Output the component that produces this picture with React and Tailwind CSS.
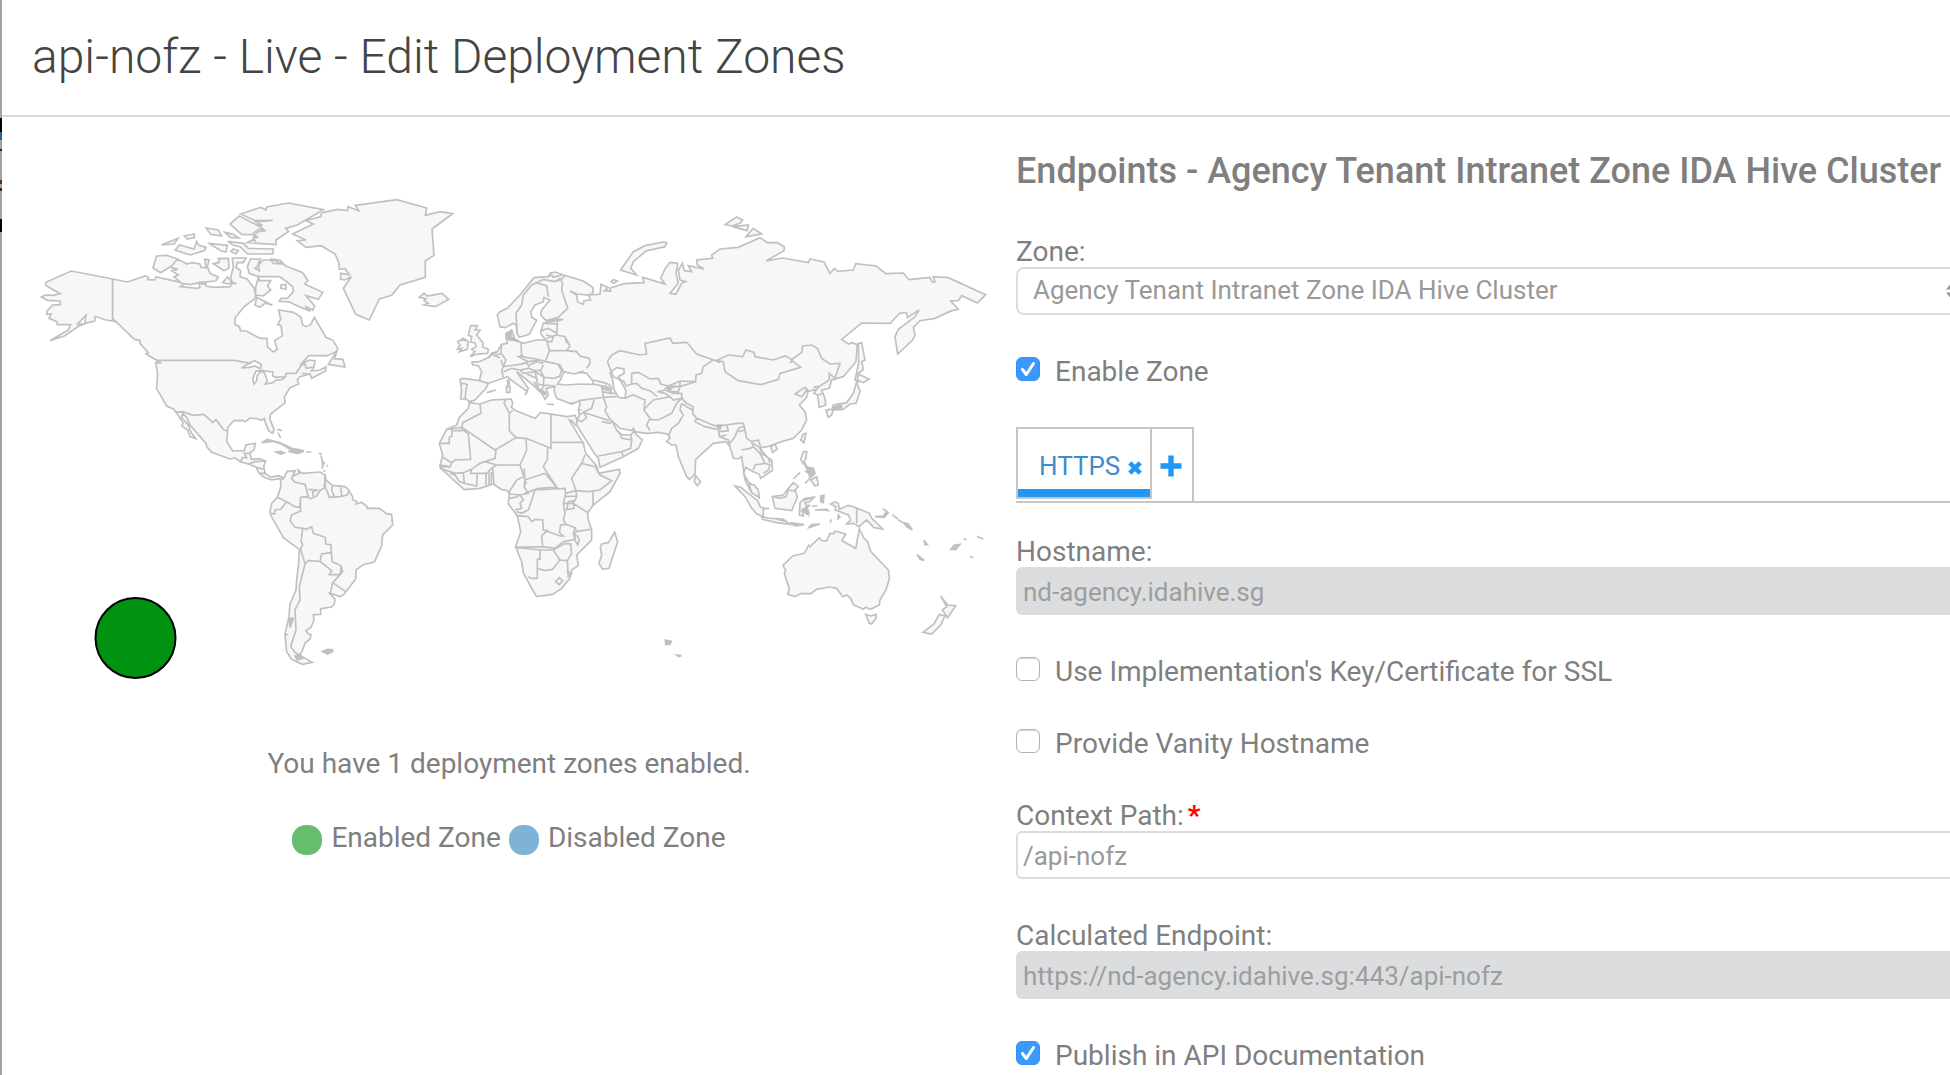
const NORTH_AMERICA = [
  // Alaska
  'M338 297L214 273L138 307L137 316L180 341L160 346L137 345L124 351L143 361L180 363L181 374L158 375L141 393L140 403L153 402L147 415L171 425L172 434L212 434L205 450L150 482L193 468L237 438L254 432L233 432L258 406L254 430L284 423L286 409L318 420L345 424L370 437L390 465L403 478L420 481L426 465L382 425L370 432L338 416Z',
  // Canada, United States, Mexico and Central America
  'M338 297L382 306L437 288L446 292L443 299L464 300L468 291L530 304L556 310L541 320L592 325L600 322L597 312L618 311L617 318L642 322L690 320L697 310L710 310L697 308L692 292L700 262L697 234L738 234L730 248L712 248L708 262L722 272L720 290L741 297L763 325L767 345L764 356L733 380L706 412L704 432L718 440L722 453L739 453L780 475L801 475L802 500L820 516L832 508L824 482L847 467L843 437L833 433L842 418L836 390L880 397L902 410L908 434L918 440L932 434L943 412L978 472L999 481L1014 506L1008 515L982 527L926 527L900 556L927 540L945 542L942 561L934 573L960 570L978 560L977 573L935 595L930 582L900 590L892 600L896 612L870 623L853 651L855 669L812 702L809 716L822 748L818 760L806 752L796 728L793 716L785 721L770 716L750 714L735 725L728 721L702 722L684 741L680 785L698 813L733 812L738 794L766 790L762 810L750 818L754 838L777 836L797 843L791 860L796 880L812 892L835 887L860 897L848 905L838 896L815 900L795 893L777 880L769 862L745 852L722 846L705 834L690 837L635 817L620 800L618 790L570 735L560 712L548 700L545 712L565 735L573 757L587 776L570 770L563 750L545 738L550 730L528 696L520 687L500 678L470 626L473 580L467 548L484 549L438 522L445 518L420 490L420 481L403 478L390 465L338 416Z',
  'M1012 510L985 553L1035 561L1029 538L1003 536Z',
  'M470 228L500 226L535 238L515 258L482 278L459 264Z',
  'M530 240L545 243L560 252L575 248L600 252L603 262L618 263L614 238L627 240L622 260L630 280L655 291L647 303L600 307L572 314L545 310L522 290L535 285L515 272L533 268L512 262Z',
  'M484 195L534 175L522 192Z',
  'M553 168L583 162L583 173L562 177Z',
  'M526 210L538 195L582 207L590 185L597 196L618 202L614 212L570 225Z',
  'M618 144L655 150L664 168L632 163Z',
  'M675 157L700 163L716 174L690 172Z',
  'M626 190L682 196L678 216L664 213Z',
  'M692 214L700 207L715 212L708 222Z',
  'M683 184L730 190L745 205L820 207L818 222L743 222L720 200L700 196Z',
  'M640 251L658 247L655 236L685 235L687 264L672 272Z',
  'M668 308L683 291L697 308L682 312Z',
  'M722 102L783 82L797 90L800 81L866 69L970 89L892 135L857 145L866 154L828 180L828 194L742 188L757 180L765 182L760 172L775 172L762 166L775 155L795 152L772 135L788 136L765 126L818 121L765 122Z',
  'M718 108L690 132L725 163L755 164L775 148L793 150L768 134Z',
  'M752 237L782 237L775 250L778 272L765 265L790 240L812 240L820 250L850 252L810 237L840 240L855 257L908 278L924 302L914 312L968 337L955 358L918 347L944 378L938 391L915 378L930 394L880 372L870 366L838 364L843 355L862 355L880 335L878 320L860 305L838 290L775 290L748 280L742 260Z',
  'M775 292L778 302L812 302L803 318L812 330L790 348L767 345L767 322Z',
  'M770 352L765 376L780 382L796 369L817 376Z',
  'M843 315L858 313L858 327L842 325Z',
  // Greenland and Iceland
  'M965 98L1013 88L1042 92L1044 80L1076 92L1066 76L1190 59L1280 84L1276 106L1320 95L1358 101L1296 147L1302 226L1276 243V292L1200 315L1175 346L1138 357L1108 420L1067 403L1030 325L1054 290L1035 300L1022 298L1022 280L1048 284L1035 266L1018 268L1016 247L1005 222L964 197L918 202L892 182L918 180L878 162L940 132L918 122L962 110Z',
  'M1258 352L1272 340L1282 348L1326 340L1346 358L1306 380L1272 375L1285 370L1272 362L1278 356Z',
];

const NORTH_AMERICA_BORDERS = [
  'M467 541H703L755 551',
  'M856 590L858 580L888 580L905 555L915 552L918 565L942 561M905 580L930 582',
  'M525 697L548 695L580 706L612 703L638 727L648 719L672 750L684 753',
  'M722 846L727 833L740 833L733 820L754 820M745 852L765 845L797 843M769 862L791 868M777 880L796 880',
];

const NORTH_AMERICA_LAKES = [
  'M725 564L755 545L765 543L783 553L783 563L778 565L765 558L748 562Z',
  'M785 572L767 574L758 598L762 612L770 603L771 588Z',
  'M785 572L818 576L818 588L826 592L856 590L848 598L828 600L818 608L795 612L802 603L795 582Z',
];

const SOUTH_AMERICA = [
  'M122 238L130 236L142 214L165 212L160 228L178 220L172 207L186 220L240 216L256 226L258 240L277 256L316 260L326 270L338 290L338 300L350 304L348 312L365 307L380 318L382 325L418 325L440 341L455 343L458 375L428 405L424 440L403 486L370 494L348 510L347 537L310 585L300 590L270 580L285 598L283 612L275 621L242 626V643L220 644L222 660L213 682L198 693L203 700L213 705L210 717L195 730L186 755L178 765L195 775L217 787L187 793L155 778L140 755L135 702L147 650L150 612L168 570L170 540L176 490L178 448L131 414L92 346L90 335L95 310L112 292L122 262Z',
];

const SOUTH_AMERICA_BORDERS = [
  'M112 292L140 305L165 320L180 322L182 292L200 290L212 296L228 290L240 272L256 262L254 226',
  'M165 212L155 235L165 247L195 253L205 290M205 268L235 270L218 275L220 290',
  'M140 305L122 328L105 330L104 342L92 340M180 310L182 333L155 345L150 362L165 382L188 385L200 388L215 380L220 400L256 412L257 432L273 434L274 458L245 462L240 484L205 482L195 492L182 448L188 432L183 425L188 385',
  'M274 458L277 485L303 497L302 515L298 524L268 524L275 512L240 484M303 497L308 515L278 548L270 585M278 548L316 574',
  'M195 492L178 560L180 600L165 630L168 690L152 740L165 757L178 765M258 240L252 258L262 275L268 292L300 290L322 285L327 272M277 256L275 270L283 290M302 262L305 286',
];

const SOUTH_AMERICA_ISLANDS = [
  'M65 128L82 118L120 128L155 145L190 152L160 154L145 145L130 135L100 124Z',
  'M108 156L122 154L133 158L122 162Z',
  'M145 154L192 154L172 160ZM198 156H214',
  'M112 88L126 92M114 98L122 114M236 160L246 162M243 166L246 182L252 188L246 206M260 195L264 199M250 214L256 212',
  'M247 754L262 748L278 749L278 755L262 762Z',
  'M148 655L160 655L155 670L150 682ZM165 768L180 762L188 775L172 780ZM136 702L145 705',
];

const AFRICA = [
  'M148 668L180 672L215 660L274 657L278 670L274 682L288 692L345 715L362 697L440 710L466 706L473 728L468 737L455 722L448 720L490 790L497 820L530 858L536 880L598 868L600 880L570 935L520 975L503 998L505 1020L515 1050V1080L495 1100L470 1125L475 1157L455 1170L450 1195L425 1225L398 1243L350 1250L335 1225L310 1178L305 1145L287 1100L302 1055L292 1007L265 972L268 938L258 930L245 929L220 912L180 925L133 929L100 900L85 885L60 863L63 845L68 825L58 790L80 748L110 735L118 712L145 685Z',
  'M584 1057L593 1085L567 1165L548 1168L537 1150L545 1125L541 1100L545 1092L565 1088Z',
];

const AFRICA_BORDERS = [
  'M180 672L183 700L128 728L126 742L80 748M126 742L225 810L288 773L268 752V700L252 668L258 657M268 700L278 692',
  'M95 740L96 768L88 772V790L58 790M126 742V752L95 752M145 762L152 838L105 840L95 848L68 832M145 762L130 750',
  'M393 702V805L318 775L288 773M393 787L490 787M383 800L382 838L370 860L410 922L355 925L315 940M318 775L320 810L300 855L230 855L195 845L225 835L228 810',
  'M195 845L180 850L155 868L130 878L105 880L60 865M155 868L152 880L200 880L218 862L230 855M130 878L133 910L170 918L172 880M198 880V915M207 878V915M214 876V912M218 862L222 912M133 910L118 905L105 885L90 880M60 856L90 862L95 848',
  'M300 855L312 890L290 900L265 940M312 865L315 900L375 880M375 880L410 922M315 900L312 920L325 940L300 945L270 942M312 920L320 905M315 940L345 930L435 925L437 940L468 932L455 895L485 850L495 825M485 850L525 860L540 885L575 902L540 930L505 935L468 932M519 932V975',
  'M345 930L325 990L305 1000L290 995M300 945L310 960L300 970L305 985L285 990M265 955L285 952L300 945M437 940L430 970L435 1000L430 1020L438 1033L465 1043L470 1055L512 1048M468 932L470 950L460 970L503 998M430 970L460 970M435 990L462 985L460 962L445 965L440 990M437 950L470 948',
  'M292 1007L325 1010L335 1025L345 1018L368 1020L370 1050L385 1055L420 1068L430 1068L418 1058L422 1035L438 1033M370 1050L382 1052L365 1068L368 1100L287 1102M368 1100L405 1105L430 1085L465 1078L460 1062L465 1043M465 1055L465 1080L473 1095L478 1080L470 1065',
  'M287 1102L360 1110L360 1138H352V1195L335 1195L325 1190M352 1165L375 1172L398 1168L420 1140L400 1110L360 1110M420 1140L442 1142L455 1120L452 1092L435 1090L400 1110M442 1142L445 1190L455 1180L440 1175M418 1193L428 1203L417 1214L407 1205Z',
];

const EURASIA = [
  'M232 405L240 395L262 385L300 345L342 293L385 290L390 280L405 276L440 288L490 303L518 322L520 335L515 342L500 345L470 342L450 333L470 345L473 366L490 373L492 362L512 360L505 345L540 343L543 313L565 323L553 332L572 333L570 325L612 311L672 308L668 292L735 312L722 295L735 267L750 247L773 250L768 280L775 310L750 340L768 342L785 310L797 305L780 300L775 270L787 250L793 272L815 275L805 257L852 267L832 255L830 240L878 235L875 225L900 207L955 202L1020 173L1042 188L1072 188L1093 200L1092 212L1038 243L1088 234L1165 248L1170 237L1212 246L1230 280L1243 265L1253 274L1300 270L1307 251L1368 258L1398 281L1450 279L1467 299L1530 292L1537 306L1545 305L1540 290L1585 293L1697 344L1672 369L1625 347L1615 362L1592 363L1615 388L1595 392L1545 415L1500 422L1480 442L1485 465L1478 480L1433 522L1425 470L1435 448L1485 410L1497 390L1462 413L1460 399L1440 399L1415 425L1412 430L1325 429L1265 478L1285 492L1295 488L1312 494L1308 545L1270 590L1235 600L1228 625L1205 630L1215 655L1217 675L1198 682L1193 645L1182 640L1190 628L1160 635L1162 628L1145 650L1125 642L1155 622L1165 632L1160 652L1138 675L1155 695L1160 720L1145 750L1120 775L1085 785L1042 800L1022 803L1025 820L1055 840L1058 870L1022 895L1018 883L1000 875L977 862L970 880L985 905L1012 930L1017 952L990 930L975 900L970 865L965 830L955 837L940 835L930 800L918 785L880 790L827 838L825 880L818 890L807 898L800 890L775 830L768 795L755 795L740 785L750 773L742 762L715 757L680 760L645 755L640 745L635 752L600 745L575 722L590 750L605 764L632 765L640 755L667 780L655 805L610 830L540 862L535 835L520 815L495 775L470 735L470 725L478 705L475 690L480 675L478 662L455 672L410 655L402 632L405 620L378 625L385 645L375 658L365 640L350 625L315 595L290 575L300 590L325 625L315 645L322 635L280 605L262 590L250 595L205 610L198 625L165 660L148 665L138 657L122 657L125 630L120 598L130 595L178 602L185 575L175 557L158 555L156 546L178 545L200 535L232 515L245 493L262 490L258 462L275 450L285 480L310 490L350 480L378 480L365 465L362 455L370 430L430 418L378 422L362 405L365 390L390 360L372 352L370 365L345 375L333 395L335 412L350 420L340 440L328 463L298 472L292 462L288 435L280 430L255 443L240 440Z',
  // Great Britain and Ireland
  'M152 437L172 437L165 450L180 450L170 465L190 490L188 500L205 508L203 520L170 523L150 530L165 515L155 508L168 500L165 488L152 487L155 470L145 465Z',
  'M113 485L130 475L145 485L142 508L118 515L125 505L112 508L120 495Z',
  // Novaya Zemlya
  'M602 270L640 215L675 197L730 186L740 188L735 200L678 213L640 245L632 265L650 285Z',
  'M573 305L580 299L592 303L582 310Z',
  // Severnaya Zemlya
  'M915 134L950 111L968 120L960 130L935 138Z',
  'M938 140L985 135L982 152Z',
  'M978 170L1000 145L1025 162Z',
  // Sakhalin and Japan
  'M1315 490L1325 488L1335 540L1325 545L1330 568L1315 580L1318 605L1305 600L1316 550Z',
  'M1315 582L1347 597L1330 608L1312 600Z',
  'M1310 605L1320 635L1308 670L1290 672L1270 688L1235 690L1240 675L1280 668L1300 640Z',
  'M1218 690L1240 688L1235 705L1225 712Z',
  // Mediterranean islands
  'M262 602L268 600L268 612L264 614ZM259 619L270 619L270 637L260 637Z',
  // Sri Lanka
  'M827 887L842 905L832 917L823 905Z',
];

const SEAS = [
  // Black Sea
  'M432 575L440 577L462 582L480 577L500 580L520 605L518 613L480 612L440 615L412 612L420 602Z',
  // Caspian Sea
  'M570 578L590 563L612 567L612 580L595 590L618 632L615 655L595 652L582 628L578 600Z',
];

const EURASIA_BORDERS = [
  // Scandinavia
  'M292 462L288 400L305 375L310 345L335 315L350 308L380 318L385 350M350 308L370 298L405 305L425 298L435 285M405 305L420 295L428 310L425 330L443 385L415 412L378 422M385 290L395 285L400 292L425 285',
  // Baltic states, Belarus, Ukraine and Poland
  'M370 430L412 432L410 465L380 475M362 452L385 445L408 458M410 465L435 470L450 498L440 512L388 512L380 480M378 465L400 470L395 485L380 485M415 412L412 432M435 470L440 490M440 512L470 515L480 528L508 535L510 550L500 565',
  'M388 512L382 530L375 545L362 540L305 530L303 485',
  'M375 545L405 550L420 555L430 575M415 555L425 572L418 590L400 595L372 592L362 572L370 555',
  // Central Europe and the Balkans
  'M245 493L243 520L258 540L250 560L300 553L325 545L295 530L310 525M325 545L360 540M232 515L215 520L205 535M243 520L225 527L240 533M243 540L250 560L245 570L250 592M250 575L275 565L300 570L325 565M300 553L320 548L328 562M325 565L345 572L362 572M328 555L350 545L370 550',
  'M300 570L310 580L345 575L350 595L320 582M345 575L362 585L372 592L370 615L352 612L350 595M352 612L355 625M370 615L405 618M372 615L365 630L380 640',
  'M130 610L142 614L138 630L135 657M130 610L122 612M178 602L205 610M262 455L258 475L285 478M262 475L295 485',
  // Turkey and the Caucasus
  'M520 612L545 618L548 635L550 652L478 662M520 600L560 610L575 620M545 618L575 625L570 640L548 635M555 615L575 640L590 640M548 625L572 632',
  // Middle East
  'M550 652L560 680L555 692L568 715L575 722M478 705L490 697L568 722M522 660L515 685L490 697M470 720L485 725L500 712L490 697M575 722L570 730L545 725M610 830L605 815L535 828M605 815L632 805L635 780L605 775L600 762M632 765L635 780M475 690L485 690',
  'M615 655L640 645L675 660L672 690L690 715L680 735L690 752M590 650L550 652M675 685L700 660L750 650L760 660L785 655L770 670L755 700L715 720L690 718',
  // Central Asia
  'M562 545L575 525L600 512L660 525L680 522L675 490L750 474L758 490L800 487L830 522L880 540L850 560L845 580L828 585L827 605L780 603L745 618L722 612L715 595L690 597L655 577L635 580L635 612L618 618L612 605L580 590L562 545',
  'M635 612L650 610L665 625L690 632L712 650M745 618L730 632L712 635L735 640L750 650M745 618L780 620L775 635L745 635M780 603L780 620L827 605M760 620L740 632L760 640L785 640L785 655M745 625L775 618',
  // China, Mongolia
  'M880 540L910 545L915 575L955 602L1022 614L1075 598L1080 580L1142 562L1120 545L1110 535L1095 528L1060 540L1005 530L1002 517L978 510L968 530L925 525L888 542L900 548',
  'M1110 550L1120 535L1145 517L1148 498L1175 495L1192 505L1205 535L1230 552L1260 550L1245 595L1228 580L1228 600L1200 618L1180 622M1190 628L1200 618M1195 645L1208 640',
  // South Asia
  'M785 655L800 670L820 680L818 700L830 715L825 725L855 740L890 748L900 738L950 730L970 730L975 750L955 755M825 712L870 732L895 740L890 748M785 670L780 690L790 705L775 730L755 745L745 770M785 670L800 680L818 690M895 740L898 770L925 780L930 800M898 755L925 752L920 735M900 770L920 765',
  'M970 740L955 745L945 770L930 790M975 750L980 775L995 785L1000 800L990 805L965 810M995 785L1015 780L1022 800M1000 800L1020 820L1035 850L1005 855L1000 870M1035 850L1050 855L1045 870L1030 880M1015 800L1045 835L1050 850M1000 790L1015 800',
];

const SMALL_EUROPE = [
  'M262 460L275 455L272 470L290 480L268 480Z',
  'M350 625L365 630L378 645L368 640ZM342 605L350 620',
  'M380 672L402 674M450 670L465 668M200 638L228 630M545 622L558 630L572 632M590 750L600 762M740 625L760 620L748 632M120 480L142 482M490 572L480 578',
  'M890 735L905 735L900 748M60 856L86 858L62 862Z',
  'M736 1380L754 1384L750 1393L737 1393ZM770 1425L784 1427L776 1430Z',
];

const OCEANIA = [
  // Australia and Tasmania
  'M538 447L552 475L563 485L572 514L625 570L628 597L618 630L600 660L598 675L572 688L557 682L550 688L520 674L512 655L500 645L488 650L470 625L447 621L410 628L392 641L362 641L345 650L323 643L328 627L313 580L317 570L309 556L338 528L373 520L386 496L390 500L418 474L427 483L440 482L450 460L462 461L465 453L497 462L486 482L527 505Z',
  'M557 703L572 708L588 703L588 715L575 732L568 730Z',
  // New Zealand
  'M782 648L803 675L827 677L803 713L787 690L800 680Z',
  'M778 703L795 708L782 735L755 762L729 757L762 732Z',
  // Sumatra and Java
  'M165 318L182 322L233 362L240 380L250 385L250 410L232 403L215 385L195 350Z',
  'M245 410L265 414L310 418L330 433L290 428L248 418Z',
  // Borneo
  'M277 350L310 345L325 325L340 308L355 320L345 330L352 352L335 392L285 385Z',
  // Sulawesi
  'M360 368L375 355L402 352L388 366L375 368L380 378L390 375L378 385L385 405L375 398L368 390L370 408L358 405Z',
  // New Guinea
  'M452 372L465 366L475 370L478 388L505 376L530 384L568 400L575 415L608 447L582 443L560 420L548 430L538 440L520 430L500 432L512 420L505 405L480 395L465 390L468 380Z',
  // Philippines
  'M370 215L380 215L378 235L372 245L382 262L368 248L362 238Z',
  'M385 262L400 265L405 280L395 290L385 280Z',
  'M392 300L410 290L415 315L405 318Z',
  // Taiwan and Hainan
  'M378 160L372 188L362 180L370 162Z',
  'M272 200L285 193L292 207L278 217Z',
  // Malay Peninsula
  'M207 312L222 315L235 330L237 352L215 338Z',
];

const OCEANIA_BORDERS = ['M530 384V430', 'M280 350L300 355L318 350L325 330L345 333'];

const OCEANIA_ISLANDS = [
  'M340 297L360 278M375 310L385 300L395 285L378 275L398 270L405 282M376 262L392 268L388 290',
  'M330 428L372 434L345 438ZM388 442L420 432L395 434ZM395 378L412 378M405 390L440 388L448 394M422 348L432 346L430 368L422 365Z',
  'M450 428L455 418M475 405L480 412L474 416ZM250 385L268 386M292 418L318 424',
  'M585 410L610 408L620 395L608 386L625 398L612 412ZM636 404L655 418M655 420L668 428M670 428L685 432L697 450L680 440Z',
  'M732 481L742 494L735 494ZM711 524L733 541L720 538ZM813 508L822 496L840 493L828 508ZM850 476L860 480M891 469L910 477M870 530L880 533',
  'M370 362L402 350M362 395L380 380L388 402',
  'M442 90L450 86M460 82L485 75L485 84L460 90Z',
];

function Land({ x, y, shapes, borders = [], seas = [], solids = [] }) {
  return (
    <g transform={`translate(${x} ${y}) scale(0.33333)`} strokeWidth="5">
      {shapes.map((d) => (
        <path key={d} d={d} fill="#f7f7f7" />
      ))}
      {seas.map((d) => (
        <path key={d} d={d} fill="#ffffff" />
      ))}
      {borders.map((d) => (
        <path key={d} d={d} fill="none" />
      ))}
      {solids.map((d) => (
        <path key={d} d={d} fill="#c0c0c0" />
      ))}
    </g>
  );
}

function WorldMap() {
  return (
    <svg
      viewBox="2 180 1014 500"
      className="block w-full"
      role="img"
      aria-label="Deployment zone map"
      stroke="#c0c0c0"
      strokeLinejoin="miter"
    >
      <Land x={0} y={180} shapes={NORTH_AMERICA} borders={NORTH_AMERICA_BORDERS} seas={NORTH_AMERICA_LAKES} />
      <Land x={240} y={400} shapes={SOUTH_AMERICA} borders={SOUTH_AMERICA_BORDERS} solids={SOUTH_AMERICA_ISLANDS} />
      <Land x={420} y={180} shapes={AFRICA} borders={AFRICA_BORDERS} />
      <Land x={420} y={180} shapes={EURASIA} borders={EURASIA_BORDERS} seas={SEAS} solids={SMALL_EUROPE} />
      <Land x={680} y={380} shapes={OCEANIA} borders={OCEANIA_BORDERS} solids={OCEANIA_ISLANDS} />
      <circle cx="135.5" cy="638" r="40" fill="#009210" stroke="#000000" strokeWidth="2" />
    </svg>
  );
}

function CheckRow({ id, label, checked }) {
  return (
    <div className="flex h-8 items-start gap-[15px]">
      <span className="relative mt-0.5 block size-6">
        <input
          id={id}
          type="checkbox"
          defaultChecked={checked}
          className="peer block size-6 appearance-none rounded-[6px] border border-[#b4b4b4] bg-white shadow-[inset_0_1px_1px_#d8d8d8] checked:border-[#3391f9] checked:bg-[#3b99fc] checked:shadow-none"
        />
        <svg
          viewBox="0 0 24 24"
          className="pointer-events-none absolute inset-0 hidden size-6 peer-checked:block"
          fill="none"
          stroke="#ffffff"
          strokeWidth="3"
          strokeLinecap="round"
          strokeLinejoin="round"
        >
          <path d="M6.5 12.5L10.3 17.5L17.5 6.5" />
        </svg>
      </span>
      <label htmlFor={id} className="text-[28px] leading-[34px]">
        {label}
      </label>
    </div>
  );
}

function TextField({ id, label, value, required, disabled }) {
  return (
    <div className="flex flex-col">
      <label htmlFor={id} className="h-8 text-[28px] leading-[34px]">
        {label}
        {required && <span className="ml-1 font-bold text-[#ff0000]">*</span>}
      </label>
      <input
        id={id}
        type="text"
        defaultValue={value}
        disabled={disabled}
        className="h-12 w-full rounded-l-[6px] border-2 border-r-0 border-[#dcdcdc] bg-white px-[5px] pt-0.5 text-[26px] text-[#999999] disabled:border-[#dcddde] disabled:bg-[#dcddde] disabled:text-[#9c9e9f]"
      />
    </div>
  );
}

function PageEdge() {
  return (
    <div className="flex w-0.5 shrink-0 flex-col bg-[#a3a3a3]" aria-hidden="true">
      <div className="mt-[118px] h-[14px] bg-black" />
      <div className="h-2 bg-[#2f5f8f]" />
      <div className="mt-[9px] h-0.5 bg-[#222222]" />
      <div className="mt-[29px] h-1 bg-[#5a2f12]" />
      <div className="mt-1 h-[3px] bg-[#3a2a18]" />
      <div className="mt-[28px] h-[13px] bg-black" />
    </div>
  );
}

export default function App() {
  return (
    <div className="flex h-screen overflow-hidden bg-white font-['Roboto',sans-serif] text-[#7f7f7f]">
      <PageEdge />
      <div className="min-w-0 flex-1">
        <header className="border-b-2 border-[#dcdcdc] px-[30px] pt-[25px] pb-[26px]">
          <h1 className="text-[48px] leading-[64px] font-light text-[#444444]">
            api-nofz - Live - Edit Deployment Zones
          </h1>
        </header>

        <main className="grid grid-cols-[minmax(0,1014fr)_minmax(0,934fr)]">
          <section className="flex flex-col pt-[63px] text-[28px] leading-8">
            <WorldMap />
            <p className="mt-[68px] text-center">You have 1 deployment zones enabled.</p>
            <ul className="mt-[42px] flex justify-center gap-2">
              <li className="flex gap-[9px]">
                <span className="mt-[3px] size-[30px] rounded-[14px] bg-[#66bd6e]" />
                Enabled Zone
              </li>
              <li className="flex gap-[9px]">
                <span className="mt-[3px] size-[30px] rounded-[14px] bg-[#7fb3d5]" />
                Disabled Zone
              </li>
            </ul>
          </section>

          <section className="flex flex-col gap-10 pt-[30px]">
            <h2 className="text-[36px] leading-[48px] font-medium whitespace-nowrap">
              Endpoints - Agency Tenant Intranet Zone IDA Hive Cluster
            </h2>

            <div className="flex flex-col">
              <label htmlFor="zone" className="h-8 text-[28px] leading-[34px]">
                Zone:
              </label>
              <div className="relative overflow-hidden">
                <select
                  id="zone"
                  className="block h-12 w-full appearance-none rounded-l-lg border-2 border-r-0 border-[#dcdcdc] bg-white px-[15px] pb-0.5 text-[26px] text-[#999999]"
                >
                  <option>Agency Tenant Intranet Zone IDA Hive Cluster</option>
                </select>
                <svg
                  viewBox="0 0 12 18"
                  className="pointer-events-none absolute top-[15px] -right-2 h-[18px] w-3"
                  fill="#999999"
                >
                  <path d="M0 7.5L6 0L12 7.5ZM0 10.5L6 18L12 10.5Z" />
                </svg>
              </div>
            </div>

            <CheckRow id="enable-zone" label="Enable Zone" checked />

            <div className="-mb-2 flex h-[76px] border-b-2 border-[#c6c6c6]">
              <div className="flex h-[72px] w-[136px] flex-col border-2 border-[#c6c6c6]">
                <div className="flex flex-1 items-center gap-2 pt-[14px] pl-[21px]">
                  <button type="button" className="text-[26px] leading-8 text-[#428bca]">
                    HTTPS
                  </button>
                  <button type="button" aria-label="Remove HTTPS" className="pt-1">
                    <svg viewBox="0 0 14 14" className="size-[14px]" stroke="#2196f3" strokeWidth="4.6">
                      <path d="M1.8 1.8L12.2 12.2M12.2 1.8L1.8 12.2" />
                    </svg>
                  </button>
                </div>
                <div className="h-2 bg-[#2196f3]" />
              </div>
              <button
                type="button"
                aria-label="Add endpoint"
                className="flex h-[74px] w-[42px] items-center justify-center border-t-2 border-r-2 border-[#c6c6c6] pt-0.5 pr-0.5"
              >
                <svg viewBox="0 0 22 22" className="size-[22px]" stroke="#2196f3" strokeWidth="5.4">
                  <path d="M11 0.5V21.5M0.5 11H21.5" />
                </svg>
              </button>
            </div>

            <TextField id="hostname" label="Hostname:" value="nd-agency.idahive.sg" disabled />
            <CheckRow id="use-key" label="Use Implementation's Key/Certificate for SSL" />
            <CheckRow id="vanity" label="Provide Vanity Hostname" />
            <TextField id="context-path" label="Context Path:" value="/api-nofz" required />
            <TextField
              id="endpoint"
              label="Calculated Endpoint:"
              value="https://nd-agency.idahive.sg:443/api-nofz"
              disabled
            />
            <CheckRow id="publish" label="Publish in API Documentation" checked />
          </section>
        </main>
      </div>
    </div>
  );
}
